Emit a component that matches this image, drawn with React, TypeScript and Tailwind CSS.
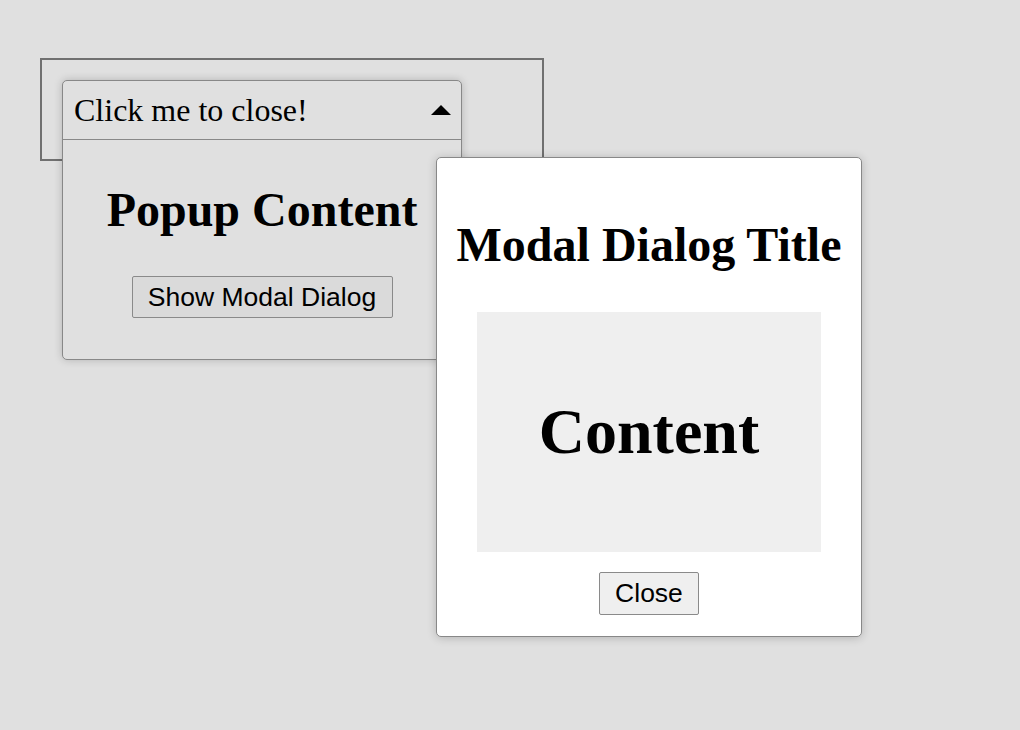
import { useState } from 'react';

export default function App() {
  const [open, setOpen] = useState(true);
  const [modal, setModal] = useState(true);

  return (
    <div className="relative min-h-screen bg-[#e0e0e0] pl-[40px] pt-[58px] font-['Liberation_Serif','Times_New_Roman',serif] text-black">
      {/* Anchor box */}
      <div className="relative h-[103px] w-[504px] border-2 border-[#707070]">
        {open && (
          <div className="absolute left-[20px] top-[20px] w-[400px] rounded-[5px] border border-[#888888] bg-[#e0e0e0] shadow-[0_0_9px_rgba(0,0,0,0.2)]">
            <button
              type="button"
              onClick={() => setOpen(false)}
              className="flex h-[59px] w-full items-center justify-between border-b border-[#888888] pl-[11px] pr-[10px] text-left"
            >
              <span className="text-[32px] leading-none">Click me to close!</span>
              <span className="h-0 w-0 border-x-[10px] border-b-[10px] border-x-transparent border-b-black" />
            </button>
            <div className="flex h-[219px] flex-col items-center pt-[46px]">
              <h2 className="text-[48px] font-bold leading-none">Popup Content</h2>
              <button
                type="button"
                onClick={() => setModal(true)}
                className="mt-[42px] h-[42px] w-[261px] rounded-[2px] border border-[#8a8a8a] bg-[#dadada] font-['Liberation_Sans',Arial,sans-serif] text-[26.5px] leading-none"
              >
                Show Modal Dialog
              </button>
            </div>
          </div>
        )}
      </div>

      {/* Modal */}
      {modal && (
        <div className="absolute left-[436px] top-[157px] flex h-[480px] w-[426px] flex-col items-center rounded-[5px] border border-[#888888] bg-white px-[40px] pt-[63px] shadow-[0_1px_10px_rgba(0,0,0,0.2)]">
          <h1 className="whitespace-nowrap text-[48px] font-bold leading-none">Modal Dialog Title</h1>
          <div className="mt-[43px] flex h-[240px] w-[344px] items-center justify-center bg-[#efefef]">
            <span className="text-[64px] font-bold leading-none">Content</span>
          </div>
          <button
            type="button"
            onClick={() => setModal(false)}
            className="mt-[20px] h-[43px] w-[100px] rounded-[2px] border border-[#8a8a8a] bg-[#efefef] font-['Liberation_Sans',Arial,sans-serif] text-[26.5px] leading-none"
          >
            Close
          </button>
        </div>
      )}
    </div>
  );
}
